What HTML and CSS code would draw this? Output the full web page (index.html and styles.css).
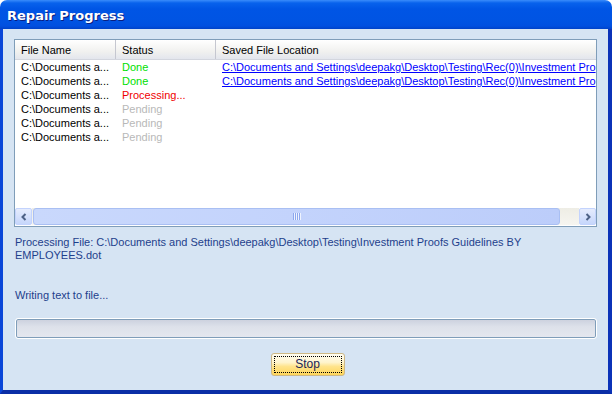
FILE: index.html
```html
<!DOCTYPE html>
<html lang="en">
<head>
    <meta charset="UTF-8">
    <title>Repair Progress</title>
    <link rel="stylesheet" href="styles.css">
</head>
<body>
    <div class="window">
        <div class="titlebar">Repair Progress</div>
        <div class="frame">
            <div class="listview">
                <div class="lv-header">
                    <div class="col col-name">File Name</div>
                    <div class="col col-status">Status</div>
                    <div class="col col-loc">Saved File Location</div>
                </div>
                <div class="lv-body">
                    <div class="row">
                        <div class="col col-name">C:\Documents a...</div>
                        <div class="col col-status done">Done</div>
                        <div class="col col-loc"><a href="#">C:\Documents and Settings\deepakg\Desktop\Testing\Rec(0)\Investment Pro</a></div>
                    </div>
                    <div class="row">
                        <div class="col col-name">C:\Documents a...</div>
                        <div class="col col-status done">Done</div>
                        <div class="col col-loc"><a href="#">C:\Documents and Settings\deepakg\Desktop\Testing\Rec(0)\Investment Pro</a></div>
                    </div>
                    <div class="row">
                        <div class="col col-name">C:\Documents a...</div>
                        <div class="col col-status busy">Processing...</div>
                        <div class="col col-loc"></div>
                    </div>
                    <div class="row">
                        <div class="col col-name">C:\Documents a...</div>
                        <div class="col col-status pending">Pending</div>
                        <div class="col col-loc"></div>
                    </div>
                    <div class="row">
                        <div class="col col-name">C:\Documents a...</div>
                        <div class="col col-status pending">Pending</div>
                        <div class="col col-loc"></div>
                    </div>
                    <div class="row">
                        <div class="col col-name">C:\Documents a...</div>
                        <div class="col col-status pending">Pending</div>
                        <div class="col col-loc"></div>
                    </div>
                </div>
                <div class="hscroll">
                    <div class="sb-btn">
                        <svg width="8" height="8" viewBox="0 0 8 8"><path d="M5.5 1 L2.5 4 L5.5 7" fill="none" stroke="#4d6185" stroke-width="2"/></svg>
                    </div>
                    <div class="sb-track">
                        <div class="sb-thumb"><span class="grip"></span></div>
                    </div>
                    <div class="sb-btn">
                        <svg width="8" height="8" viewBox="0 0 8 8"><path d="M2.5 1 L5.5 4 L2.5 7" fill="none" stroke="#4d6185" stroke-width="2"/></svg>
                    </div>
                </div>
            </div>

            <p class="info">Processing File: C:\Documents and Settings\deepakg\Desktop\Testing\Investment Proofs Guidelines BY EMPLOYEES.dot</p>
            <p class="info step">Writing text to file...</p>

            <div class="progress"></div>

            <div class="actions">
                <button class="btn"><span>Stop</span></button>
            </div>
        </div>
    </div>
</body>
</html>
```

FILE: styles.css
```css
/* Repair dialog, XP look */
body {
    margin: 0;
    padding: 0;
    font-family: 'Liberation Sans', Arial, sans-serif;
    font-size: 11px;
    background: #fff;
}

.window {
    width: 612px;
    height: 394px;
    display: flex;
    flex-direction: column;
    overflow: hidden;
}

.titlebar {
    height: 29px;
    box-sizing: border-box;
    padding: 8px 0 0 7px;
    color: #fff;
    font-family: 'DejaVu Sans', sans-serif;
    font-weight: bold;
    font-size: 13px;
    text-shadow: 1px 1px 0 #0a1e80;
    background: linear-gradient(#3a8cfb 0, #0862ec 3px, #0055e5 9px, #0054e3 20px, #0150e0 26px, #0042c8 29px);
    border-radius: 7px 7px 0 0;
}

.frame {
    flex: 1;
    background: #d6e4f3;
    border-left: 3px solid #0a46d8;
    border-right: 4px solid #0b32b8;
    border-bottom: 4px solid #0a2ea6;
    padding: 10px 10px 0 11px;
}

.listview {
    width: 583px;
    height: 188px;
    box-sizing: border-box;
    border: 1px solid #7f9db9;
    background: #fff;
    display: flex;
    flex-direction: column;
}

.lv-header {
    display: flex;
    height: 19px;
    background: linear-gradient(#ffffff, #f1f1ef 60%, #e3e6ed);
    border-bottom: 1px solid #d3d6de;
    color: #000;
}

.lv-header .col {
    line-height: 20px;
    border-right: 1px solid #c5c7d0;
}

.lv-body {
    flex: 1;
}

.row {
    display: flex;
    height: 14px;
    line-height: 14px;
}

.col {
    box-sizing: border-box;
    padding-left: 6px;
    white-space: nowrap;
    overflow: hidden;
}

.col-name { width: 101px; }
.col-status { width: 100px; }
.col-loc { flex: 1; border-right: none !important; }

.done { color: #00e000; }
.busy { color: #f00000; }
.pending { color: #b8b8b8; }

.col-loc a {
    color: #0000ff;
    text-decoration: underline;
}

.hscroll {
    display: flex;
    height: 17px;
    margin: 0 0 1px 0;
    background: #fdfdfb;
}

.sb-btn {
    width: 17px;
    height: 17px;
    box-sizing: border-box;
    border: 1px solid #c3d3fd;
    border-radius: 2px;
    background: linear-gradient(#e5ecfd, #c6d6fb);
    display: flex;
    align-items: center;
    justify-content: center;
}

.sb-track {
    flex: 1;
    padding: 0 19px 0 1px;
    background: linear-gradient(#eeede5, #f6f5f0);
}

.sb-thumb {
    height: 17px;
    box-sizing: border-box;
    border: 1px solid #a9bff3;
    border-radius: 3px;
    background: linear-gradient(90deg, #c9d8fc, #c3d3fc 50%, #bccdfa);
    display: flex;
    align-items: center;
    justify-content: center;
}

.grip {
    width: 8px;
    height: 7px;
    background: repeating-linear-gradient(90deg, #8da8ee 0 1px, #eef3ff 1px 2px);
}

.info {
    margin: 9px 0 0 1px;
    width: 560px;
    color: #1e3f8c;
    line-height: 13px;
}

.step {
    margin-top: 27px;
}

.progress {
    width: 580px;
    height: 19px;
    box-sizing: border-box;
    margin: 17px 0 0 2px;
    border: 1px solid #7f9db9;
    outline: 1px solid #fff;
    border-radius: 2px;
    background: linear-gradient(#cdd2df, #dde1ea 40%, #e4e7ef);
}

.actions {
    display: flex;
    justify-content: center;
    margin-top: 15px;
    padding-left: 3px;
}

.btn {
    width: 74px;
    height: 23px;
    padding: 2px;
    border: 1px solid #cdb886;
    border-radius: 3px;
    background: linear-gradient(#fffdf2, #fff4cc 40%, #ffe38a 60%, #ffd65a);
    font-family: 'Liberation Sans', Arial, sans-serif;
    font-size: 12px;
    color: #1a2458;
    cursor: pointer;
}

.btn span {
    display: block;
    height: 100%;
    box-sizing: border-box;
    border: 1px dotted #000;
    line-height: 15px;
}
```
